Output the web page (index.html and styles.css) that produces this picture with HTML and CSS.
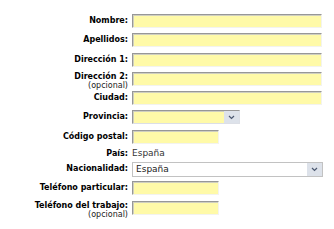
FILE: index.html
```html
<html>

<head>
	<title>
		Datos personales
	</title>

	<link rel="stylesheet" href="styles.css">
</head>

<body>
	<div class="form">
		<div class="row">
			<label class="label">Nombre:</label>
			<input type="text" class="input" />
		</div>
		<div class="row">
			<label class="label">Apellidos:</label>
			<input type="text" class="input" />
		</div>
		<div class="row">
			<label class="label">Dirección 1:</label>
			<input type="text" class="input" />
		</div>
		<div class="row">
			<label class="label label-stacked">Dirección 2:<span class="label-note">(opcional)</span></label>
			<input type="text" class="input" />
		</div>
		<div class="row">
			<label class="label">Ciudad:</label>
			<input type="text" class="input" />
		</div>
		<div class="row">
			<label class="label">Provincia:</label>
			<div class="select select-province">
				<span class="select-value"></span>
				<span class="select-arrow">
					<svg width="7" height="5" viewBox="0 0 7 5"><path d="M1 1 L3.5 3.5 L6 1" fill="none" stroke="#4b5870" stroke-width="1.2" /></svg>
				</span>
			</div>
		</div>
		<div class="row">
			<label class="label">Código postal:</label>
			<input type="text" class="input input-short" />
		</div>
		<div class="row row-short">
			<label class="label label-plain">País:</label>
			<span class="value">España</span>
		</div>
		<div class="row">
			<label class="label">Nacionalidad:</label>
			<div class="select select-plain">
				<span class="select-value">España</span>
				<span class="select-arrow">
					<svg width="7" height="5" viewBox="0 0 7 5"><path d="M1 1 L3.5 3.5 L6 1" fill="none" stroke="#4b5870" stroke-width="1.2" /></svg>
				</span>
			</div>
		</div>
		<div class="row">
			<label class="label">Teléfono particular:</label>
			<input type="text" class="input input-short" />
		</div>
		<div class="row">
			<label class="label label-stacked">Teléfono del trabajo:<span class="label-note">(opcional)</span></label>
			<input type="text" class="input input-short" />
		</div>
	</div>
</body>

</html>
```

FILE: styles.css
```css
html,
body {
	margin: 0px;
	padding: 0px;
	background-color: #fff;
	font-family: "DejaVu Sans", Verdana, sans-serif;
}

.form {
	padding-top: 14px;
}

.row {
	display: flex;
	align-items: flex-start;
	height: 19.3px;
}

.row-short {
	height: 13px;
}

.label {
	width: 128px;
	margin-right: 4px;
	text-align: right;
	font-size: 8px;
	font-weight: bold;
	line-height: 13px;
	color: #000;
	white-space: nowrap;
}

.label-stacked {
	line-height: 9.5px;
	padding-top: 0px;
}

.label-plain {
	line-height: 9px;
}

.label-note {
	display: block;
	font-weight: normal;
	color: #222;
}

.input {
	display: block;
	margin: 0px;
	padding: 0px;
	width: 190px;
	height: 14px;
	box-sizing: border-box;
	background-color: #fffaa8;
	border-top: 1px solid #979797;
	border-left: 1px solid #979797;
	border-right: 1px solid #f3f3ee;
	border-bottom: 1px solid #f3f3ee;
	box-shadow: inset 1px 1px 0px #cfcfc0;
	outline: none;
}

.input-short {
	width: 87px;
}

.value {
	font-size: 9px;
	line-height: 9px;
	color: #333;
}

.select {
	display: flex;
	width: 108px;
	height: 14px;
	box-sizing: border-box;
	background-color: #fffaa8;
	border-top: 1px solid #979797;
	border-left: 1px solid #979797;
	border-right: 1px solid #dcdfe6;
	border-bottom: 1px solid #dcdfe6;
	box-shadow: inset 1px 1px 0px #cfcfc0;
}

.select-plain {
	width: 191px;
	height: 15px;
	background-color: #fff;
	border: 1px solid #c2c2c2;
	box-shadow: none;
}

.select-value {
	flex: 1;
	padding-left: 3px;
	font-size: 9px;
	line-height: 13px;
	color: #222;
}

.select-arrow {
	display: flex;
	align-items: center;
	justify-content: center;
	width: 15px;
	background-color: #dde2ea;
}
```
